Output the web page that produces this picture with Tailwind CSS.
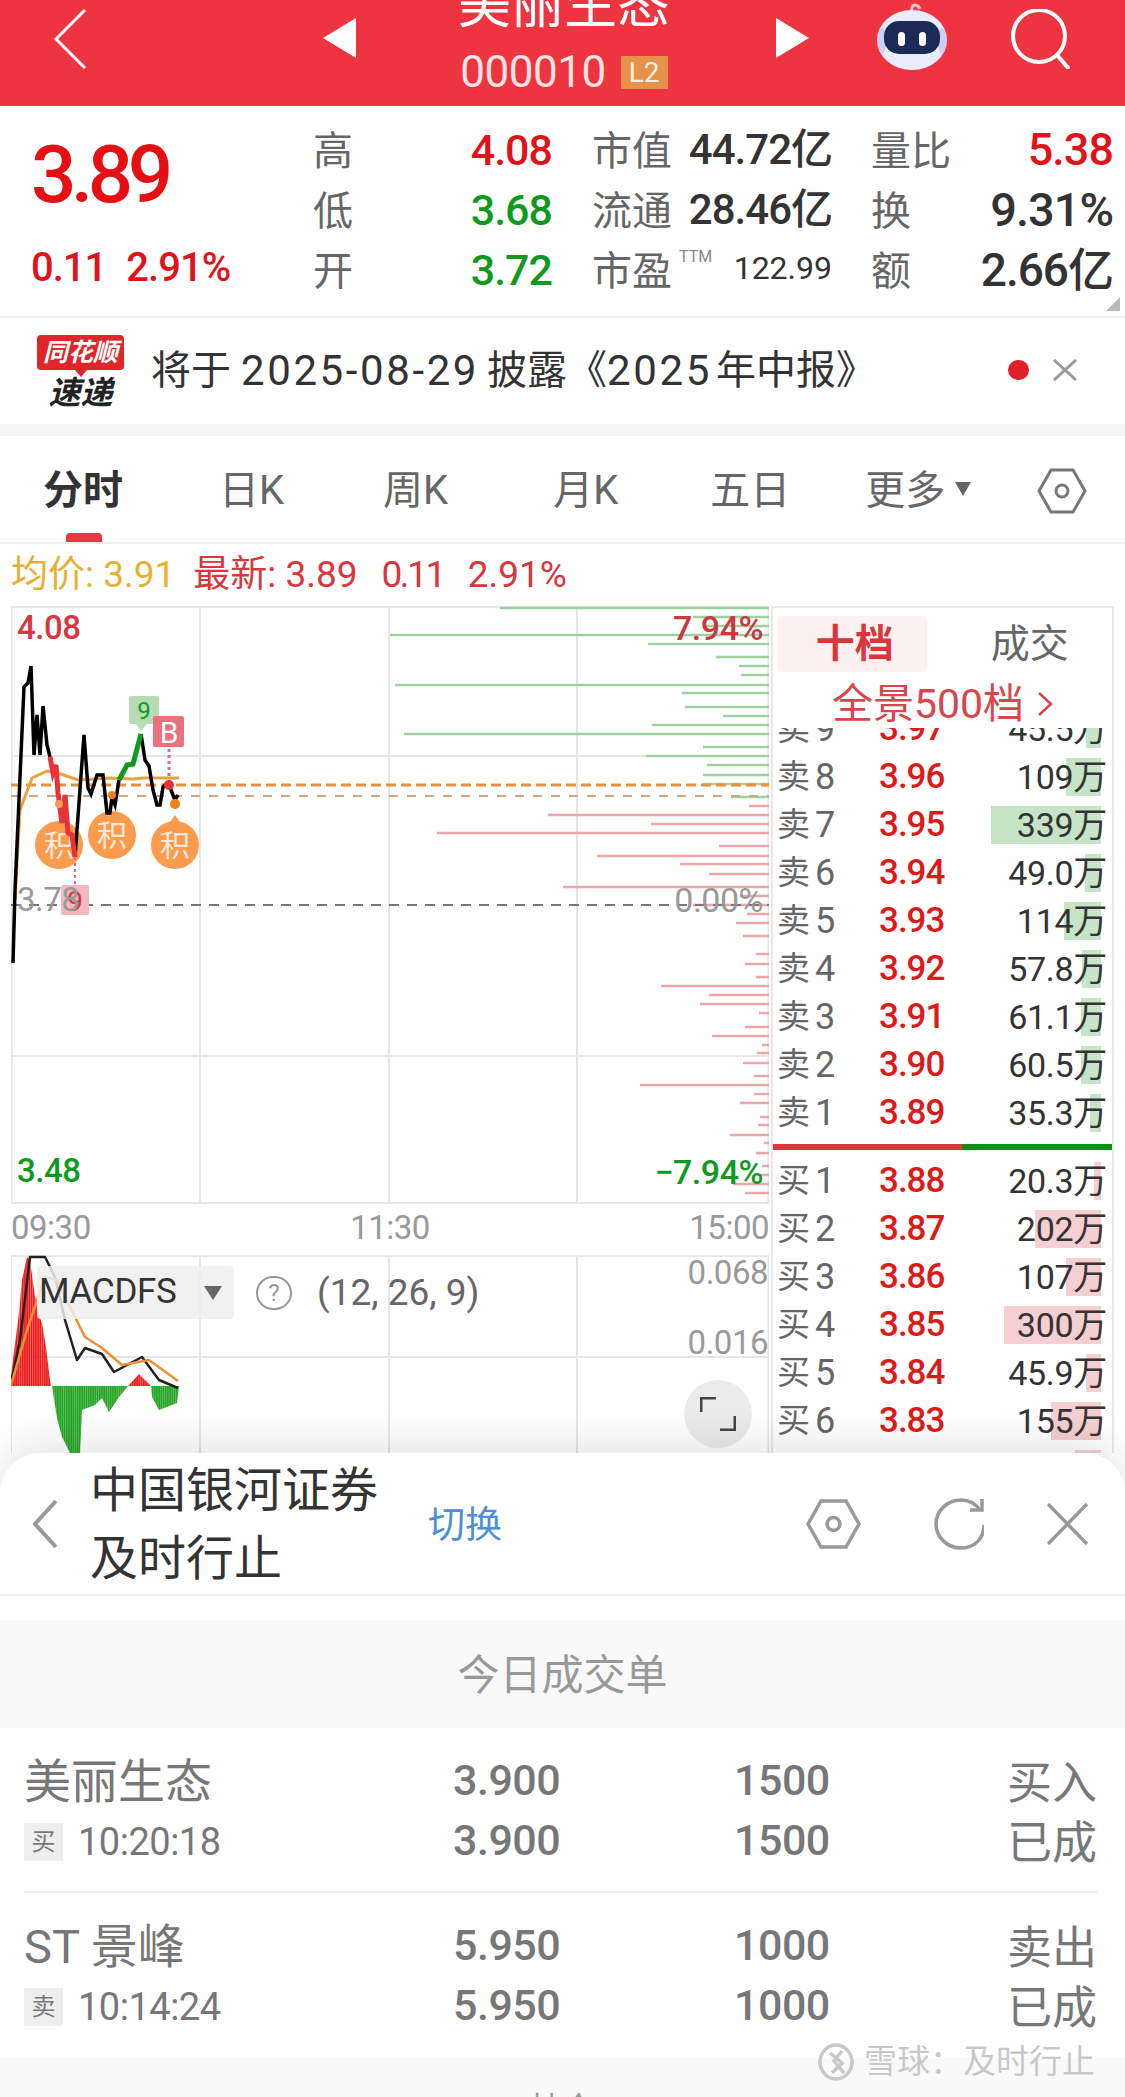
<!DOCTYPE html>
<html lang="zh-CN">

<head>
	<meta charset="UTF-8">
	<meta name="viewport" content="width=device-width, initial-scale=1.0">
	<script src="https://cdn.jsdelivr.net/npm/@tailwindcss/browser@4"></script>
	<title>美丽生态 000010</title>
</head>

<body class="w-[1125px] h-[2097px] overflow-hidden bg-white font-['Roboto','Noto_Sans_CJK_SC',sans-serif] text-[#333]">

	<!-- top bar -->
	<header class="flex h-[106px] items-start overflow-hidden bg-[#ee3440] pl-[54px] text-white">
		<svg class="mt-[9px] h-[60px] w-[32px]" viewBox="0 0 32 60" fill="none" stroke="#fff" stroke-width="3"><path d="M31 1 2 30l29 29"/></svg>
		<svg class="ml-[237px] mt-[18px] h-[40px] w-[33px]" viewBox="0 0 33 40" fill="#fff"><path d="M33 0v40L0 20z"/></svg>
		<div class="flex h-[106px] w-[420px] flex-col items-center pr-[4px]">
			<div class="-mt-[21px] text-[53px] leading-[52px]">美丽生态</div>
			<div class="mt-[25px] flex h-[33px] items-center">
				<span class="text-[44px] leading-[33px] tracking-[-0.5px] text-[#fbe3e3]">000010</span>
				<span class="ml-[15px] flex h-[33px] w-[47px] items-center justify-center bg-[#e6924a] text-[28px] text-[#fbeedd]">L2</span>
			</div>
		</div>
		<svg class="mt-[18px] h-[40px] w-[33px]" viewBox="0 0 33 40" fill="#fff"><path d="M0 0v40l33-20z"/></svg>
		<svg class="ml-[68px] mt-[3px] h-[68px] w-[70px]" viewBox="0 0 70 68">
			<path d="M35 10c-1-4 0-8 3-8 3 0 4 2 5 4" fill="none" stroke="#f3c6d0" stroke-width="3"/>
			<ellipse cx="35" cy="37" rx="35" ry="30" fill="#e9ecfb"/>
			<ellipse cx="5" cy="38" rx="4" ry="13" fill="#c9cff5"/>
			<ellipse cx="65" cy="38" rx="4" ry="13" fill="#c9cff5"/>
			<rect x="7" y="18" width="56" height="33" rx="15" fill="#1c2a57"/>
			<rect x="21" y="29" width="7" height="14" rx="3.5" fill="#fff"/>
			<rect x="42" y="29" width="7" height="14" rx="3.5" fill="#fff"/>
		</svg>
		<svg class="ml-[64px] mt-[9px] h-[60px] w-[59px]" viewBox="0 0 59 60" fill="none" stroke="#fff" stroke-width="4"><circle cx="28" cy="27" r="26"/><path d="m46 46 12 14"/></svg>
	</header>

	<!-- quote -->
	<section class="relative flex h-[212px] border-b-2 border-[#eeeeee]">
		<div class="w-[313px] pl-[31px] pt-[29px]">
			<div class="text-[80px] font-medium leading-[80px] tracking-[-5.5px] text-[#e60f14]">3.89</div>
			<div class="mt-[33px] flex text-[40px] font-medium leading-[40px] tracking-[-1px] text-[#e2121a]">
				<span>0.11</span><span class="ml-[20px]">2.91%</span>
			</div>
		</div>
		<div class="w-[239px] pt-[16px] text-[40px] leading-[60px] text-[#666]">
			<div class="flex justify-between"><span>高</span><span class="text-[43px] font-medium leading-[56px] tracking-[-1px] text-[#e2121a]">4.08</span></div>
			<div class="flex justify-between"><span>低</span><span class="text-[43px] font-medium leading-[56px] tracking-[-1px] text-[#0e9a1e]">3.68</span></div>
			<div class="flex justify-between"><span>开</span><span class="text-[43px] font-medium leading-[56px] tracking-[-1px] text-[#0e9a1e]">3.72</span></div>
		</div>
		<div class="ml-[40px] w-[240px] pt-[16px] text-[40px] leading-[60px] text-[#666]">
			<div class="flex justify-between"><span>市值</span><span class="text-[42px] font-medium leading-[56px] tracking-[-1px] text-[#333]">44.72亿</span></div>
			<div class="flex justify-between"><span>流通</span><span class="text-[42px] font-medium leading-[56px] tracking-[-1px] text-[#333]">28.46亿</span></div>
			<div class="flex"><span>市盈</span><span class="ml-[7px] text-[16px] leading-[30px] text-[#888]">TTM</span><span class="ml-auto text-[32px] leading-[52px] text-[#333]">122.99</span></div>
		</div>
		<div class="ml-[39px] w-[242px] pt-[16px] text-[40px] leading-[60px] text-[#666]">
			<div class="flex justify-between"><span>量比</span><span class="text-[45px] font-medium leading-[56px] tracking-[-1px] text-[#e2121a]">5.38</span></div>
			<div class="flex justify-between"><span>换</span><span class="text-[47px] font-medium leading-[56px] tracking-[-1px] text-[#333]">9.31%</span></div>
			<div class="flex justify-between"><span>额</span><span class="text-[46px] font-medium leading-[56px] tracking-[-1px] text-[#333]">2.66亿</span></div>
		</div>
		<svg class="absolute bottom-[5px] right-[5px] h-[14px] w-[14px]" viewBox="0 0 14 14" fill="#bbb"><path d="M14 0v14H0z"/></svg>
	</section>

	<!-- news strip -->
	<section class="flex h-[106px] items-center">
		<div class="ml-[37px] flex w-[87px] flex-col items-center">
			<div class="relative flex h-[35px] w-[87px] items-center justify-center rounded-[4px] bg-[#e0252b] text-[25px] font-bold italic leading-[35px] text-white">同花顺<span class="absolute -bottom-[7px] left-[38px] h-0 w-0 border-x-[6px] border-t-[7px] border-x-transparent border-t-[#e0252b]"></span></div>
			<div class="mt-[8px] text-[32px] font-bold italic leading-[30px] text-[#222]">速递</div>
		</div>
		<div class="ml-[27px] flex items-center text-[40px] leading-[44px] text-[#333]">
			<span>将于</span>
			<span class="ml-[10px] text-[42px] tracking-[2.6px]">2025-08-29</span>
			<span class="ml-[8px]">披露《</span>
			<span class="text-[42px] tracking-[2.6px]">2025</span>
			<span class="ml-[4px]">年中报》</span>
		</div>
		<span class="absolute left-[1008px] top-[360px] h-[20px] w-[21px] rounded-full bg-[#e2202c]"></span>
		<svg class="absolute left-[1053px] top-[359px] h-[22px] w-[24px]" viewBox="0 0 24 22" fill="none" stroke="#999" stroke-width="3"><path d="m1 1 22 20M23 1 1 21"/></svg>
	</section>
	<div class="h-[12px] bg-[#f5f5f5]"></div>

	<!-- period tabs -->
	<nav class="flex h-[108px] items-center border-b-2 border-[#eeeeee] text-[40px] text-[#666]">
		<div class="relative ml-[43px] flex h-[106px] w-[80px] items-center pt-[4px] text-[40px] font-bold text-[#333]">分时<span class="absolute bottom-0 left-[23px] h-[9px] w-[36px] rounded-t-[4px] bg-[#ee3440]"></span></div>
		<span class="ml-[96px] pt-[4px]">日K</span>
		<span class="ml-[99px] pt-[4px]">周K</span>
		<span class="ml-[105px] pt-[4px]">月K</span>
		<span class="ml-[92px] pt-[4px]">五日</span>
		<span class="ml-[75px] pt-[4px]">更多</span>
		<svg class="ml-[10px] h-[14px] w-[16px]" viewBox="0 0 16 14" fill="#666"><path d="M0 0h16L8 14z"/></svg>
		<svg class="ml-[66px] mt-[4px] h-[46px] w-[50px]" viewBox="0 0 50 46" fill="none" stroke="#777" stroke-width="3"><path d="M14 2h22l12 21-12 21H14L2 23z"/><circle cx="25" cy="23" r="6"/></svg>
	</nav>

	<!-- price summary -->
	<div class="flex h-[62px] items-center pl-[11px] text-[37px] text-[#d9363e]">
		<span class="text-[#e8b030]">均价: 3.91</span>
		<span class="ml-[18px]">最新: 3.89</span>
		<span class="ml-[24px] tracking-[-2.5px]">0.11</span>
		<span class="ml-[24px]">2.91%</span>
	</div>

	<!-- chart + order book -->
	<section class="flex h-[847px] overflow-hidden">
		<div class="ml-[11px] w-[760px] shrink-0">
			<div class="relative h-[598px] w-[758px]">
				<svg class="absolute inset-0 h-[598px] w-[758px]" viewBox="11 606 758 598" fill="none">
					<path d="M11.5 606V1204M200 606V1204M389 606V1204M577 606V1204M768.5 606V1204M11 607H769M11 756H769M11 1056H769M11 1203H769" stroke="#e6e6e6" stroke-width="2"/>
					<path stroke="#9fd0a0" stroke-width="2.5" d="M500 608H769M693 617H769M703 626H769M390 635H769M648 644H769M716 657H769M739 666H769M741 675H769M395 685H769M682 693H769M685 707H769M723 716H769M652 725H769M404 734H769M703 747H769M646 756H769M707 765H769M703 775H769M703 784H769M731 797H769"/>
					<path stroke="#eda7ab" stroke-width="2.5" d="M749 806H769M548 815H769M651 824H769M437 833H769M719 846H769M597 856H769M680 864H769M709 874H769M563 887H769M740 896H769M693 905H769M747 914H769M736 923H769M743 936H769M756 954H769M745 964H769M756 977H769M661 986H769M709 995H769M700 1004H769M759 1013H769M745 1027H769M712 1036H769M762 1045H769M757 1053H769M743 1063H769M754 1076H769M640 1085H769M754 1094H769M740 1103H769M760 1117H769M758 1125H769M730 1135H769M764 1143H769M756 1153H769M762 1166H769M760 1175H769M733 1184H769M745 1193H769"/>
					<path d="M11 905H769" stroke="#777" stroke-width="2" stroke-dasharray="10 8"/>
					<path d="M11 796H769" stroke="#c9a98a" stroke-width="2" stroke-dasharray="9 9"/>
					<path d="M11 785H769" stroke="#e8913a" stroke-width="3" stroke-dasharray="10 5"/>
					<g fill="#fb9b4e">
						<circle cx="59" cy="845" r="24"/><circle cx="112" cy="835" r="24"/><circle cx="175" cy="845" r="24"/>
						<path d="M170 822h10l-5-7z"/>
					</g>
					<g fill="#fff" font-size="30" text-anchor="middle" fill-opacity="0.8">
						<text x="59" y="856">积</text><text x="112" y="846">积</text><text x="175" y="856">积</text>
					</g>
					<path d="M15 900 20 810 32 778 47 771 55 772 78 780 110 778 133 779 143 778 179 778" stroke="#e9a23b" stroke-width="3"/>
					<path d="M13 963 15 890 24 687 28 683 31 666 34 755 37 715 40 755 43 706 47 745 50 757M75 857 84 735 88 788 91 794 97 775 103 775 107 813 110 813 112 797 115 805 119 780M141 734 145 760 149 766 153 790 157 805 160 805 163 787 167 783 169 785 175 800 178 795" stroke="#000" stroke-width="3.5"/>
					<path d="M50 757 53 773 56 765 58 793 62 823 65 795 68 833 72 835 75 857" stroke="#e8323a" stroke-width="5"/>
					<path d="M119 780 127 765 133 764 141 734" stroke="#0e9a1e" stroke-width="5"/>
					<circle cx="112" cy="795" r="4" fill="#f57f17"/><circle cx="175" cy="804" r="5" fill="#f57f17"/><circle cx="59" cy="804" r="4" fill="#fb9b4e"/>
					<path d="M75 857 75 884" stroke="#d86a8a" stroke-width="2" stroke-dasharray="3 3"/>
					<rect x="61" y="885" width="28" height="30" rx="2" fill="#f5b8c0"/>
					<text x="75" y="911" fill="#d9363e" font-size="28" text-anchor="middle">9</text>
					<path d="M136 724h11l-6 7z" fill="#b5dcb5"/>
					<rect x="129" y="696" width="30" height="28" rx="2" fill="#b5dcb5"/>
					<text x="144" y="719" fill="#0e9a1e" font-size="24" text-anchor="middle">9</text>
					<rect x="153" y="716" width="31" height="31" rx="2" fill="#e8737f"/>
					<text x="169" y="743" fill="#fff" font-size="30" text-anchor="middle">B</text>
					<path d="M169 749V778" stroke="#d86a8a" stroke-width="3" stroke-dasharray="3 3"/>
					<circle cx="169" cy="785" r="5" fill="#e8323a"/>
				</svg>
				<span class="absolute left-[6px] top-[4px] text-[33px] font-medium leading-[36px] tracking-[-0.5px] text-[#d9363e]">4.08</span>
				<span class="absolute left-[6px] top-[276px] text-[33px] leading-[36px] tracking-[-0.5px] text-[#999]">3.78</span>
				<span class="absolute left-[6px] top-[547px] text-[33px] font-medium leading-[36px] tracking-[-0.5px] text-[#0e9a1e]">3.48</span>
				<span class="absolute right-[6px] top-[4px] text-[34px] font-medium leading-[36px] tracking-[-0.5px] text-[#c9393e]">7.94%</span>
				<span class="absolute right-[6px] top-[276px] text-[34px] leading-[36px] tracking-[-0.5px] text-[#999]">0.00%</span>
				<span class="absolute right-[6px] top-[548px] text-[34px] font-medium leading-[36px] tracking-[-0.5px] text-[#0e9a1e]">−7.94%</span>
			</div>

			<div class="flex h-[51px] w-[758px] items-center justify-between pb-[3px] text-[33px] tracking-[-0.5px] text-[#999]">
				<span>09:30</span><span>11:30</span><span>15:00</span>
			</div>

			<div class="relative h-[198px] w-[758px]">
				<svg class="absolute inset-0 h-[198px] w-[758px]" viewBox="11 1255 758 198" fill="none" stroke-linejoin="round">
					<defs>
						<pattern id="redBars" width="2.2" height="4" patternUnits="userSpaceOnUse"><rect width="1.95" height="4" fill="#ee1c1c"/></pattern>
						<pattern id="greenBars" width="2.2" height="4" patternUnits="userSpaceOnUse"><rect width="2" height="4" fill="#26a626"/></pattern>
					</defs>
					<path d="M11 1255V1453M200 1255V1453M389 1255V1453M577 1255V1453M768.5 1255V1453M11 1256H769M11 1357H769" stroke="#e6e6e6" stroke-width="2"/>
					<path d="M11 1386 12 1367 19 1313 22 1280 27 1257 30 1260 34 1290 38 1313 42 1323 46 1347 50 1380 51 1386ZM128 1386 139 1374 151 1386Z" fill="url(#redBars)"/>
					<path d="M52 1386 57 1418 62 1437 70 1453 80 1453 82 1410 95 1405 102 1398 109 1412 119 1397 128 1386ZM151 1386 152 1397 159 1410 177 1403 179 1386Z" fill="url(#greenBars)"/>
					<path d="M11 1383 20 1340 30 1257 45 1257 55 1277 65 1320 77 1360 85 1348 102 1354 114 1372 142 1357 159 1380 178 1388" stroke="#222" stroke-width="2.5"/>
					<path d="M11 1385 27 1330 45 1277 57 1280 70 1307 85 1337 102 1348 122 1365 149 1360 178 1381" stroke="#e8913a" stroke-width="2.5"/>
				</svg>
				<div class="absolute left-[26px] top-[11px] flex h-[53px] w-[197px] items-center rounded-[4px] bg-[#efefef]/85 pl-[2px]">
					<span class="text-[35px] tracking-[-0.3px] text-[#333]">MACDFS</span>
					<svg class="ml-auto mr-[12px] h-[14px] w-[18px]" viewBox="0 0 18 14" fill="#666"><path d="M0 0h18L9 14z"/></svg>
				</div>
				<div class="absolute left-[245px] top-[21px] flex h-[34px] w-[36px] items-center justify-center rounded-full border-2 border-[#999] text-[24px] leading-[30px] text-[#999]">?</div>
				<span class="absolute left-[306px] top-[18px] text-[37px] leading-[40px] text-[#666]">(12, 26, 9)</span>
				<span class="absolute right-[1px] top-[0px] text-[33px] leading-[36px] tracking-[-0.5px] text-[#999]">0.068</span>
				<span class="absolute right-[1px] top-[70px] text-[33px] leading-[36px] tracking-[-0.5px] text-[#999]">0.016</span>
				<div class="absolute left-[673px] top-[125px] flex h-[68px] w-[68px] items-center justify-center rounded-full bg-[#ebebeb]">
					<svg class="h-[34px] w-[36px]" viewBox="0 0 36 34" fill="none" stroke="#444" stroke-width="3"><path d="M1 15V1h15M35 19v14H20"/></svg>
				</div>
			</div>
		</div>

		<!-- order book -->
		<aside class="flex w-[343px] shrink-0 flex-col border-x-2 border-t-2 border-[#e8e8e8]">
			<div class="flex h-[64px] items-start pl-[5px] pt-[8px] text-[39px]">
				<div class="flex h-[56px] w-[154px] items-center justify-center rounded-[4px] bg-[#fdf0f0] pl-[4px] font-bold text-[#d9363e]">十档</div>
				<div class="flex h-[56px] w-[190px] items-center justify-center pl-[20px] text-[#666]">成交</div>
			</div>
			<div class="flex h-[56px] items-center justify-center pt-[8px] text-[41px] leading-[48px] text-[#d9454d]">全景500档<svg class="ml-[13px] h-[26px] w-[16px]" viewBox="0 0 16 26" fill="none" stroke="#d9454d" stroke-width="2.5"><path d="m2 2 12 11L2 24"/></svg></div>
			<div class="flex-1 overflow-hidden text-[34px]">
				<div class="-mt-[23px]">
					<div class="relative flex h-[48px] items-center pl-[4px]"><span class="w-[38px] text-[33px] text-[#666]">卖</span><span class="w-[64px] text-[36px] text-[#666]">9</span><span class="text-[35px] font-medium tracking-[-1px] text-[#dd1a1a]">3.97</span><span class="absolute right-[11px] top-[5px] h-[38px] w-[15px] bg-[#c6e4c6]"></span><span class="relative ml-auto pr-[5px] tracking-[-0.3px]">45.5万</span></div>
					<div class="relative flex h-[48px] items-center pl-[4px]"><span class="w-[38px] text-[33px] text-[#666]">卖</span><span class="w-[64px] text-[36px] text-[#666]">8</span><span class="text-[35px] font-medium tracking-[-1px] text-[#dd1a1a]">3.96</span><span class="absolute right-[11px] top-[5px] h-[38px] w-[35px] bg-[#c6e4c6]"></span><span class="relative ml-auto pr-[5px] tracking-[-0.3px]">109万</span></div>
					<div class="relative flex h-[48px] items-center pl-[4px]"><span class="w-[38px] text-[33px] text-[#666]">卖</span><span class="w-[64px] text-[36px] text-[#666]">7</span><span class="text-[35px] font-medium tracking-[-1px] text-[#dd1a1a]">3.95</span><span class="absolute right-[11px] top-[5px] h-[38px] w-[110px] bg-[#c6e4c6]"></span><span class="relative ml-auto pr-[5px] tracking-[-0.3px]">339万</span></div>
					<div class="relative flex h-[48px] items-center pl-[4px]"><span class="w-[38px] text-[33px] text-[#666]">卖</span><span class="w-[64px] text-[36px] text-[#666]">6</span><span class="text-[35px] font-medium tracking-[-1px] text-[#dd1a1a]">3.94</span><span class="absolute right-[11px] top-[5px] h-[38px] w-[16px] bg-[#c6e4c6]"></span><span class="relative ml-auto pr-[5px] tracking-[-0.3px]">49.0万</span></div>
					<div class="relative flex h-[48px] items-center pl-[4px]"><span class="w-[38px] text-[33px] text-[#666]">卖</span><span class="w-[64px] text-[36px] text-[#666]">5</span><span class="text-[35px] font-medium tracking-[-1px] text-[#dd1a1a]">3.93</span><span class="absolute right-[11px] top-[5px] h-[38px] w-[37px] bg-[#c6e4c6]"></span><span class="relative ml-auto pr-[5px] tracking-[-0.3px]">114万</span></div>
					<div class="relative flex h-[48px] items-center pl-[4px]"><span class="w-[38px] text-[33px] text-[#666]">卖</span><span class="w-[64px] text-[36px] text-[#666]">4</span><span class="text-[35px] font-medium tracking-[-1px] text-[#dd1a1a]">3.92</span><span class="absolute right-[11px] top-[5px] h-[38px] w-[19px] bg-[#c6e4c6]"></span><span class="relative ml-auto pr-[5px] tracking-[-0.3px]">57.8万</span></div>
					<div class="relative flex h-[48px] items-center pl-[4px]"><span class="w-[38px] text-[33px] text-[#666]">卖</span><span class="w-[64px] text-[36px] text-[#666]">3</span><span class="text-[35px] font-medium tracking-[-1px] text-[#dd1a1a]">3.91</span><span class="absolute right-[11px] top-[5px] h-[38px] w-[20px] bg-[#c6e4c6]"></span><span class="relative ml-auto pr-[5px] tracking-[-0.3px]">61.1万</span></div>
					<div class="relative flex h-[48px] items-center pl-[4px]"><span class="w-[38px] text-[33px] text-[#666]">卖</span><span class="w-[64px] text-[36px] text-[#666]">2</span><span class="text-[35px] font-medium tracking-[-1px] text-[#dd1a1a]">3.90</span><span class="absolute right-[11px] top-[5px] h-[38px] w-[20px] bg-[#c6e4c6]"></span><span class="relative ml-auto pr-[5px] tracking-[-0.3px]">60.5万</span></div>
					<div class="relative flex h-[48px] items-center pl-[4px]"><span class="w-[38px] text-[33px] text-[#666]">卖</span><span class="w-[64px] text-[36px] text-[#666]">1</span><span class="text-[35px] font-medium tracking-[-1px] text-[#dd1a1a]">3.89</span><span class="absolute right-[11px] top-[5px] h-[38px] w-[11px] bg-[#c6e4c6]"></span><span class="relative ml-auto pr-[5px] tracking-[-0.3px]">35.3万</span></div>

					<div class="my-[7px] flex h-[6px]"><span class="w-[189px] bg-[#d9363e]"></span><span class="flex-1 bg-[#0e8f1a]"></span></div>

					<div class="relative mt-[6px] flex h-[48px] items-center pl-[4px]"><span class="w-[38px] text-[33px] text-[#666]">买</span><span class="w-[64px] text-[36px] text-[#666]">1</span><span class="text-[35px] font-medium tracking-[-1px] text-[#dd1a1a]">3.88</span><span class="absolute right-[11px] top-[5px] h-[38px] w-[7px] bg-[#f5cfd2]"></span><span class="relative ml-auto pr-[5px] tracking-[-0.3px]">20.3万</span></div>
					<div class="relative flex h-[48px] items-center pl-[4px]"><span class="w-[38px] text-[33px] text-[#666]">买</span><span class="w-[64px] text-[36px] text-[#666]">2</span><span class="text-[35px] font-medium tracking-[-1px] text-[#dd1a1a]">3.87</span><span class="absolute right-[11px] top-[5px] h-[38px] w-[66px] bg-[#f5cfd2]"></span><span class="relative ml-auto pr-[5px] tracking-[-0.3px]">202万</span></div>
					<div class="relative flex h-[48px] items-center pl-[4px]"><span class="w-[38px] text-[33px] text-[#666]">买</span><span class="w-[64px] text-[36px] text-[#666]">3</span><span class="text-[35px] font-medium tracking-[-1px] text-[#dd1a1a]">3.86</span><span class="absolute right-[11px] top-[5px] h-[38px] w-[35px] bg-[#f5cfd2]"></span><span class="relative ml-auto pr-[5px] tracking-[-0.3px]">107万</span></div>
					<div class="relative flex h-[48px] items-center pl-[4px]"><span class="w-[38px] text-[33px] text-[#666]">买</span><span class="w-[64px] text-[36px] text-[#666]">4</span><span class="text-[35px] font-medium tracking-[-1px] text-[#dd1a1a]">3.85</span><span class="absolute right-[11px] top-[5px] h-[38px] w-[97px] bg-[#f5cfd2]"></span><span class="relative ml-auto pr-[5px] tracking-[-0.3px]">300万</span></div>
					<div class="relative flex h-[48px] items-center pl-[4px]"><span class="w-[38px] text-[33px] text-[#666]">买</span><span class="w-[64px] text-[36px] text-[#666]">5</span><span class="text-[35px] font-medium tracking-[-1px] text-[#dd1a1a]">3.84</span><span class="absolute right-[11px] top-[5px] h-[38px] w-[15px] bg-[#f5cfd2]"></span><span class="relative ml-auto pr-[5px] tracking-[-0.3px]">45.9万</span></div>
					<div class="relative flex h-[48px] items-center pl-[4px]"><span class="w-[38px] text-[33px] text-[#666]">买</span><span class="w-[64px] text-[36px] text-[#666]">6</span><span class="text-[35px] font-medium tracking-[-1px] text-[#dd1a1a]">3.83</span><span class="absolute right-[11px] top-[5px] h-[38px] w-[50px] bg-[#f5cfd2]"></span><span class="relative ml-auto pr-[5px] tracking-[-0.3px]">155万</span></div>
					<div class="relative flex h-[48px] items-center pl-[4px]"><span class="w-[38px] text-[33px] text-[#666]">买</span><span class="w-[64px] text-[36px] text-[#666]">7</span><span class="text-[35px] font-medium tracking-[-1px] text-[#dd1a1a]">3.82</span><span class="absolute right-[11px] top-[5px] h-[38px] w-[26px] bg-[#f5cfd2]"></span><span class="relative ml-auto pr-[5px] tracking-[-0.3px]">88.1万</span></div>
				</div>
			</div>
		</aside>
	</section>

	<!-- bottom sheet -->
	<section class="relative z-10 rounded-t-[40px] bg-white shadow-[0_-14px_36px_rgba(0,0,0,0.09)]">
		<div class="flex h-[143px] items-center border-b-2 border-[#eeeeee] pl-[32px]">
			<svg class="h-[48px] w-[25px]" viewBox="0 0 25 48" fill="none" stroke="#999" stroke-width="4"><path d="M24 1 3 24l21 23"/></svg>
			<div class="ml-[33px] mt-[3px] w-[338px] text-[48px] leading-[68px] text-[#333]">中国银河证券<br>及时行止</div>
			<span class="mt-[4px] text-[37px] text-[#4a90d9]">切换</span>
			<svg class="ml-[304px] h-[50px] w-[55px]" viewBox="0 0 55 50" fill="none" stroke="#999" stroke-width="3.5"><path d="M15 2h25l13 23-13 23H15L2 25z"/><circle cx="27.5" cy="25" r="6.5"/></svg>
			<svg class="ml-[73px] h-[54px] w-[50px]" viewBox="0 0 50 54" fill="none" stroke="#999" stroke-width="3.5"><path d="M46 13C41 6 34 3 27 3 13 3 2 14 2 27s11 24 25 24 23-10 23-23"/><path d="M36 13h12V2" fill="none"/></svg>
			<svg class="ml-[63px] h-[42px] w-[41px]" viewBox="0 0 41 42" fill="none" stroke="#999" stroke-width="3.5"><path d="m1 1 39 40M40 1 1 41"/></svg>
		</div>
		<div class="h-[24px]"></div>
		<div class="flex h-[108px] items-center justify-center bg-[#f9f9f9] pt-[2px] text-[42px] text-[#999]">今日成交单</div>

		<div class="h-[330px] pl-[24px] pr-[28px] pt-[26px] text-[#777]">
			<div class="flex h-[139px] border-b-2 border-[#eeeeee]">
				<div class="w-[429px]">
					<div class="text-[47px] leading-[56px]">美丽生态</div>
					<div class="mt-[4px] flex items-center"><span class="flex h-[38px] w-[39px] items-center justify-center bg-[#eeeeee] text-[24px] text-[#777]">买</span><span class="ml-[15px] text-[38px] leading-[56px] tracking-[-0.5px]">10:20:18</span></div>
				</div>
				<div class="-mt-[4px] w-[281px] text-[43px] font-medium leading-[60px] tracking-[-0.5px]"><div>3.900</div><div>3.900</div></div>
				<div class="-mt-[4px] text-[43px] font-medium leading-[60px] tracking-[-0.5px]"><div>1500</div><div>1500</div></div>
				<div class="ml-auto text-[45px] leading-[60px]"><div>买入</div><div>已成</div></div>
			</div>
			<div class="mt-[26px] flex">
				<div class="w-[429px]">
					<div class="text-[47px] leading-[56px]">ST 景峰</div>
					<div class="mt-[4px] flex items-center"><span class="flex h-[38px] w-[39px] items-center justify-center bg-[#eeeeee] text-[24px] text-[#777]">卖</span><span class="ml-[15px] text-[38px] leading-[56px] tracking-[-0.5px]">10:14:24</span></div>
				</div>
				<div class="-mt-[4px] w-[281px] text-[43px] font-medium leading-[60px] tracking-[-0.5px]"><div>5.950</div><div>5.950</div></div>
				<div class="-mt-[4px] text-[43px] font-medium leading-[60px] tracking-[-0.5px]"><div>1000</div><div>1000</div></div>
				<div class="ml-auto text-[45px] leading-[60px]"><div>卖出</div><div>已成</div></div>
			</div>
		</div>
		<div class="flex h-[60px] justify-center bg-[#f9f9f9] pt-[33px] text-[32px] leading-[36px] text-[#999]">持仓</div>

		<!-- watermark -->
		<div class="absolute left-[818px] top-[589px] flex items-center text-[33px] leading-[40px] text-[#c8c8c8] [text-shadow:0_0_2px_#fff]">
			<svg class="h-[38px] w-[36px]" viewBox="0 0 36 38" fill="none" stroke="#c8c8c8" stroke-width="3.5"><path d="M18 2c9 0 16 8 16 17s-7 17-16 17S2 28 2 19 9 2 18 2z"/><path d="M12 10 24 20 14 30M24 8l-8 10 10 12"/></svg>
			<span class="ml-[10px]">雪球：及时行止</span>
		</div>
	</section>
</body>

</html>
